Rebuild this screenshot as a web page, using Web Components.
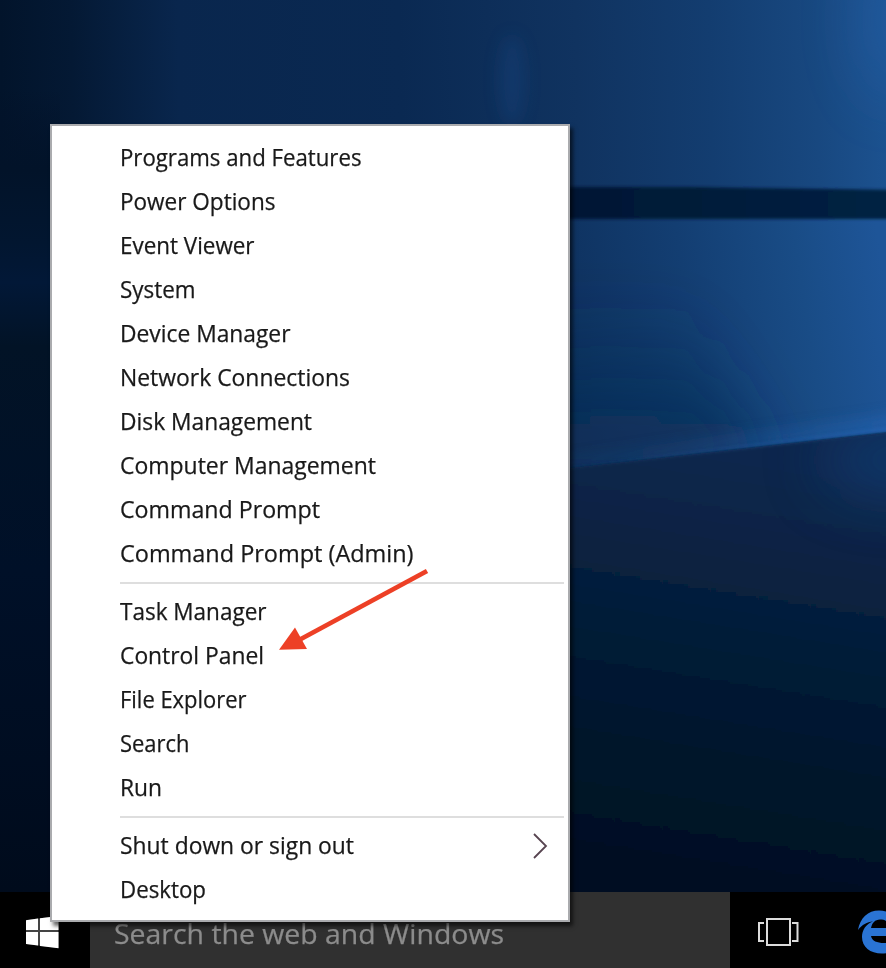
<!DOCTYPE html>
<html lang="en">
<head>
<meta charset="utf-8">
<title>Desktop</title>
<style>
html, body { margin: 0; height: 100%; overflow: hidden; background: #020e24; }
body { font-family: "Open Sans", "Noto Sans", sans-serif; }
</style>
</head>
<body>
<win-desktop>
  <desk-wallpaper slot="wallpaper"></desk-wallpaper>
  <win-menu slot="menu">
    <menu-item w="241.5">Programs and Features</menu-item>
    <menu-item w="155.5">Power Options</menu-item>
    <menu-item w="134.5">Event Viewer</menu-item>
    <menu-item w="75.5">System</menu-item>
    <menu-item w="170.5">Device Manager</menu-item>
    <menu-item w="230">Network Connections</menu-item>
    <menu-item w="192">Disk Management</menu-item>
    <menu-item w="256">Computer Management</menu-item>
    <menu-item w="200">Command Prompt</menu-item>
    <menu-item w="293.5">Command Prompt (Admin)</menu-item>
    <menu-separator></menu-separator>
    <menu-item w="146.5">Task Manager</menu-item>
    <menu-item w="144">Control Panel</menu-item>
    <menu-item w="126.5">File Explorer</menu-item>
    <menu-item w="69.5">Search</menu-item>
    <menu-item w="42">Run</menu-item>
    <menu-separator></menu-separator>
    <menu-item w="234" submenu>Shut down or sign out</menu-item>
    <menu-item w="86">Desktop</menu-item>
  </win-menu>
  <win-taskbar slot="taskbar">
    <start-button></start-button>
    <search-box>Search the web and Windows</search-box>
    <task-view></task-view>
    <edge-button></edge-button>
  </win-taskbar>
  <pointer-arrow slot="note"></pointer-arrow>
</win-desktop>
<script>
const define = (name, html, setup) => customElements.define(name, class extends HTMLElement {
  connectedCallback() {
    if (this.shadowRoot) return;
    this.attachShadow({ mode: 'open' }).innerHTML = html;
    if (setup) setup(this, this.shadowRoot);
  }
});
// Condenses a label horizontally so that it takes the requested width.
const fit = (span, width) => {
  const w = span.getBoundingClientRect().width;
  if (w) span.style.transform = `scaleX(${width / w})`;
};

define('win-desktop', `
<style>
:host { display: flex; flex-direction: column; justify-content: flex-end; position: relative; width: 886px; height: 968px; overflow: hidden; }
::slotted([slot=wallpaper]) { position: absolute; inset: 0; }
::slotted([slot=menu]) { position: absolute; left: 50px; top: 124px; z-index: 2; }
::slotted([slot=taskbar]) { position: relative; z-index: 1; }
::slotted([slot=note]) { position: absolute; left: 270px; top: 560px; z-index: 3; }
</style>
<slot name="wallpaper"></slot><slot name="menu"></slot><slot name="taskbar"></slot><slot name="note"></slot>`);

define('desk-wallpaper', `
<style>:host { display: block; } svg { display: block; }</style>
<svg width="886" height="968" viewBox="0 0 886 968">
  <defs>
    <linearGradient id="top" x1="0" x2="886" y1="20" y2="0" gradientUnits="userSpaceOnUse">
      <stop offset="0" stop-color="#02142b"/><stop offset=".08" stop-color="#041934"/><stop offset=".2" stop-color="#09264d"/>
      <stop offset=".45" stop-color="#0a2952"/><stop offset=".65" stop-color="#103360"/><stop offset=".8" stop-color="#133d70"/>
      <stop offset=".92" stop-color="#184880"/><stop offset="1" stop-color="#1c5290"/>
    </linearGradient>
    <linearGradient id="mid" x1="560" x2="886" y1="340" y2="290" gradientUnits="userSpaceOnUse">
      <stop offset="0" stop-color="#0e315e"/><stop offset=".4" stop-color="#133e72"/><stop offset=".75" stop-color="#194c86"/><stop offset="1" stop-color="#1e5598"/>
    </linearGradient>
    <linearGradient id="left" x1="0" x2="0" y1="90" y2="892" gradientUnits="userSpaceOnUse">
      <stop offset="0" stop-color="#021128" stop-opacity="0"/><stop offset=".1" stop-color="#021329"/><stop offset=".19" stop-color="#021630"/>
      <stop offset=".24" stop-color="#021837"/><stop offset=".32" stop-color="#021326"/><stop offset=".6" stop-color="#001028"/><stop offset="1" stop-color="#000b1c"/>
    </linearGradient>
    <linearGradient id="low" x1="690" x2="620" y1="450" y2="880" gradientUnits="userSpaceOnUse">
      <stop offset="0" stop-color="#09274d"/><stop offset=".22" stop-color="#072242"/><stop offset=".45" stop-color="#051b36"/>
      <stop offset=".7" stop-color="#02142b"/><stop offset="1" stop-color="#000f22"/>
    </linearGradient>
    <linearGradient id="band" x1="560" x2="886" y1="0" y2="0" gradientUnits="userSpaceOnUse">
      <stop offset="0" stop-color="#031734"/><stop offset=".5" stop-color="#041c3a"/><stop offset="1" stop-color="#062143"/>
    </linearGradient>
    <linearGradient id="shade" x1="0" x2="0" y1="300" y2="450" gradientUnits="userSpaceOnUse">
      <stop offset="0" stop-color="#0b2c54" stop-opacity="0"/><stop offset="1" stop-color="#0b2c54" stop-opacity=".75"/>
    </linearGradient>
    <linearGradient id="ray" x1="570" x2="886" y1="0" y2="0" gradientUnits="userSpaceOnUse">
      <stop offset="0" stop-color="#184b83" stop-opacity=".4"/><stop offset="1" stop-color="#2565b5"/>
    </linearGradient>
    <filter id="b1" x="-10%" y="-30%" width="120%" height="160%"><feGaussianBlur stdDeviation="1.6"/></filter>
    <filter id="b8" x="-80%" y="-80%" width="260%" height="260%"><feGaussianBlur stdDeviation="8"/></filter>
    <filter id="b30" x="-100%" y="-100%" width="300%" height="300%"><feGaussianBlur stdDeviation="30"/></filter>
    <clipPath id="midclip"><path d="M560 216H886V432L560 469Z"/></clipPath>
    <clipPath id="lowclip"><path d="M560 471L886 434V892H560Z"/></clipPath>
  </defs>
  <rect width="886" height="968" fill="url(#top)"/>
  <ellipse cx="512" cy="80" rx="13" ry="45" fill="#18427b" opacity=".45" filter="url(#b8)"/>
  <ellipse cx="896" cy="20" rx="35" ry="80" fill="#2864ad" opacity=".45" filter="url(#b30)"/>
  <rect y="90" width="60" height="810" fill="url(#left)"/>
  <g clip-path="url(#midclip)">
    <rect x="560" y="210" width="330" height="270" fill="url(#mid)"/>
    <path d="M510 280H670L770 480H510Z" fill="url(#shade)" filter="url(#b30)"/>
    <path d="M570 466L900 429V416L570 460Z" fill="url(#ray)" opacity=".8" filter="url(#b8)"/>
    <path d="M570 471L900 433V425L570 467Z" fill="url(#ray)" opacity=".5" filter="url(#b1)"/>
  </g>
  <path d="M540 187H690L900 190V219H540Z" fill="url(#band)" filter="url(#b1)"/>
  <path d="M550 470L910 430V920H550Z" fill="url(#low)" filter="url(#b1)"/>
  <g clip-path="url(#lowclip)"><ellipse cx="900" cy="460" rx="80" ry="35" fill="#15427a" opacity=".65" filter="url(#b30)"/></g>
</svg>`);

define('win-menu', `
<style>
:host { display: flex; flex-direction: column; box-sizing: border-box; width: 520px; height: 798px; padding: 10px 4px 0 68px; background: #fff; border: 2px solid #aaabae; box-shadow: 3px 4px 4px rgba(0,0,0,.6); color: #191919; }
</style><slot></slot>`);

define('menu-item', `
<style>
:host { display: flex; align-items: center; justify-content: space-between; height: 44px; font-size: 24px; line-height: 42px; white-space: nowrap; }
span { display: inline-block; padding-bottom: 2px; transform-origin: 0 50%; -webkit-text-stroke: .25px #191919; }
svg { margin-right: 14px; }
</style><span><slot></slot></span>`, (el, root) => {
  fit(root.querySelector('span'), +el.getAttribute('w'));
  if (el.hasAttribute('submenu')) root.innerHTML += `<svg width="18" height="28" viewBox="0 0 18 28" fill="none" stroke="#574450" stroke-width="1.8"><path d="M2 2L14 14L2 26"/></svg>`;
});

define('menu-separator', `
<style>:host { display: flex; align-items: center; height: 14px; } i { flex: 1; height: 2px; background: #dedede; }</style><i></i>`);

define('win-taskbar', `
<style>:host { display: flex; height: 76px; background: #000; }</style><slot></slot>`);

define('start-button', `
<style>:host { display: flex; width: 90px; height: 76px; } svg { display: block; }</style>
<svg width="90" height="76" viewBox="0 0 90 76"><path d="M26 28L58.500 24V56L26 52Z" fill="#444"/><path fill="#fff" d="M26 28.300L38 26.500V38H26ZM40 26.200L58.500 24V38H40ZM26 40H38V53.500L26 52ZM40 40H58.500V56.300L40 54Z"/></svg>`);

define('search-box', `
<style>
:host { display: flex; align-items: center; box-sizing: border-box; width: 640px; height: 76px; padding: 5px 0 0 24px; background: #303030; color: #8c8c8c; font-size: 28px; white-space: nowrap; }
span { display: inline-block; transform-origin: 0 50%; -webkit-text-stroke: .25px #8c8c8c; }
</style><span><slot></slot></span>`, (el, root) => fit(root.querySelector('span'), 390));

define('task-view', `
<style>:host { display: flex; width: 96px; height: 76px; } svg { display: block; }</style>
<svg width="96" height="76" viewBox="0 0 96 76" fill="none" stroke="#dcdcdc" stroke-width="2"><path d="M37 27H60V53H37ZM34 31H29V49H34M62 31H67.500V49H62"/></svg>`);

define('edge-button', `
<style>:host { display: flex; flex: 1; min-width: 0; overflow: hidden; } svg { display: block; flex: none; }</style>
<svg width="90" height="76" viewBox="0 0 90 76" fill="#2a74d4"><path d="M32 38C34 26 42 18.500 53 18.500C66 18.500 75 28 75 41V44H45C46 49 51 51 58 51C63 51 68 50 72 48V57C67 60 62 61.500 56 61.500C44 61.500 36 55 36 45C36 38 40 32 47 29.500C41 30 36 32.500 32 38ZM45 36H63C63 30 60 27.500 54 27.500C49 27.500 46 31 45 36Z"/></svg>`);

define('pointer-arrow', `
<style>:host { display: block; } svg { display: block; }</style>
<svg width="170" height="100" viewBox="0 0 170 100"><path d="M157 11L30 79.500" stroke="#ed4026" stroke-width="4.800"/><path d="M9 89.700L25 67.500L37 89Z" fill="#ed4026"/></svg>`);
</script>
</body>
</html>
